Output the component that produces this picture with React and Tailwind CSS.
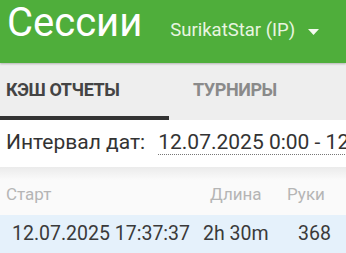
export default function App() {
  const font = { fontFamily: "Roboto, 'Noto Sans', sans-serif" };
  return (
    <div className="w-[346px] h-[253px] overflow-hidden bg-white" style={font}>
      <div className="h-[63px] bg-[#4fae3b] flex items-baseline pt-[3px] pl-[7px] shadow-[0_1px_2px_rgba(0,0,0,0.25)] relative z-10 whitespace-nowrap">
        <div className="text-white text-[40px] leading-[40px]">Сессии</div>
        <div className="ml-[28px] flex items-baseline text-[#e8f5e0] text-[18.5px] leading-none">
          <span>SurikatStar (IP)</span>
          <svg width="11" height="6" viewBox="0 0 11 6" className="ml-[13px] relative top-[-1px]">
            <path d="M0 0 L11 0 L5.5 6 Z" fill="#f4faf0" />
          </svg>
        </div>
      </div>
      <div className="h-[57px] bg-[#eeeeee] flex whitespace-nowrap">
        <div className="w-[169px] relative flex items-center pl-[6px] pb-[5px]">
          <span className="text-[18px] font-bold text-[#444] tracking-[-0.4px]">КЭШ ОТЧЕТЫ</span>
          <div className="absolute left-0 right-0 bottom-0 h-[4px] bg-[#333]" />
        </div>
        <div className="flex items-center pl-[24px] pb-[5px]">
          <span className="text-[18px] font-bold text-[#8a8a8a] tracking-[-0.4px]">ТУРНИРЫ</span>
        </div>
      </div>
      <div className="h-[47px] flex items-center pl-[6px] pb-[2px] whitespace-nowrap">
        <span className="text-[21px] text-[#333]">Интервал дат:</span>
        <span className="ml-[13px] text-[21px] text-[#333] border-b border-dotted border-[#777] leading-[24px]">12.07.2025 0:00 - 12.07.2025 23:59</span>
      </div>
      <div className="h-[13px] bg-gradient-to-b from-[#ebebeb] to-[#fafafa]" />
      <div className="h-[35px] bg-[#fafafa] flex items-center text-[17px] text-[#b5b5b5] pb-[6px] whitespace-nowrap">
        <span className="pl-[6px] w-[210px]">Старт</span>
        <span className="w-[77px]">Длина</span>
        <span>Руки</span>
      </div>
      <div className="h-[38px] bg-[#e5f1fb] flex items-center text-[19.5px] text-[#3a3a3a] whitespace-nowrap">
        <span className="pl-[12px] w-[203px]">12.07.2025 17:37:37</span>
        <span className="w-[95px]">2h 30m</span>
        <span>368</span>
      </div>
    </div>
  );
}
